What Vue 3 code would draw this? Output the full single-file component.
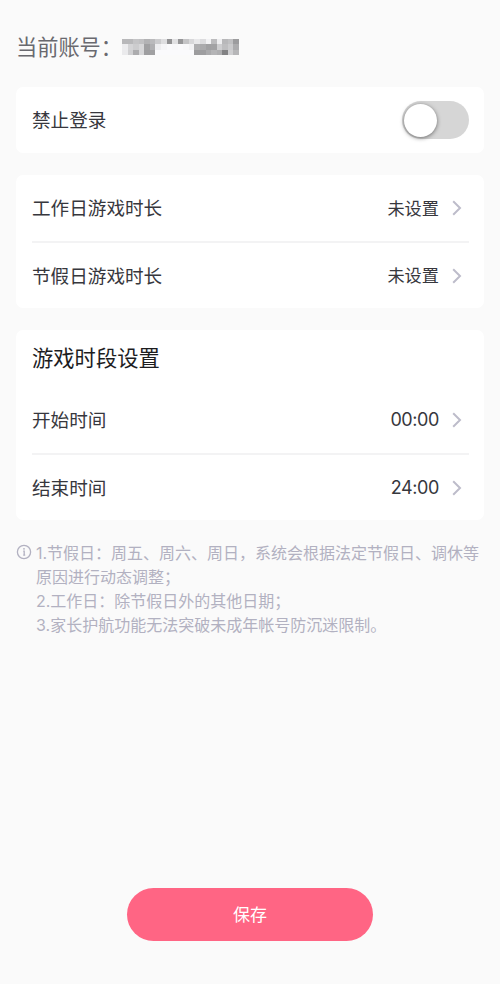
<script setup>
import { ref } from 'vue'

const blocked = ref(false)

const durations = [
  { label: '工作日游戏时长', value: '未设置' },
  { label: '节假日游戏时长', value: '未设置' },
]
const periods = [
  { label: '开始时间', value: '00:00' },
  { label: '结束时间', value: '24:00' },
]

// Grey levels of the mosaic that hides the account number, row by row
const mosaic = [
  [184, 184, 196, 192, 178, 186, 204, 222, 146, 224, 150, 196, 216, 232, 220, 242, 188, 238, 184, 192, 156],
  [236, 212, 204, 214, 160, 176, 238, 246, 250, 248, 250, 248, 242, 174, 170, 160, 162, 206, 190, 202, 172],
  [234, 208, 172, 214, 158, 160, 250, 250, 250, 250, 250, 250, 250, 156, 158, 170, 180, 174, 130, 206, 182],
]
const cells = mosaic.flat()
</script>

<template>
  <main class="page">
    <header class="account">
      <span>当前账号：</span>
      <div class="mosaic">
        <i v-for="(g, i) in cells" :key="i" :style="{ background: `rgb(${g}, ${g}, ${g + 2})` }"></i>
      </div>
    </header>

    <section class="card">
      <div class="row">
        <span class="label">禁止登录</span>
        <button class="toggle" :class="{ on: blocked }" @click="blocked = !blocked"><span class="knob"></span></button>
      </div>
    </section>

    <section class="card">
      <div v-for="item in durations" :key="item.label" class="row">
        <span class="label">{{ item.label }}</span>
        <span class="value">{{ item.value }}</span>
        <svg class="chevron" viewBox="0 0 10 16"><path d="M1.2 1.3 8 8l-6.8 6.7" /></svg>
      </div>
    </section>

    <section class="card">
      <h2>游戏时段设置</h2>
      <div v-for="item in periods" :key="item.label" class="row">
        <span class="label">{{ item.label }}</span>
        <span class="value time">{{ item.value }}</span>
        <svg class="chevron" viewBox="0 0 10 16"><path d="M1.2 1.3 8 8l-6.8 6.7" /></svg>
      </div>
    </section>

    <section class="notes">
      <svg class="info" viewBox="0 0 16 16">
        <circle cx="8" cy="8" r="6.6" />
        <path d="M7.2 7.2h1v4.3M7.2 11.2h2" />
        <circle class="dot" cx="8" cy="4.8" r=".9" />
      </svg>
      <div>
        <p>1.节假日：周五、周六、周日，系统会根据法定节假日、调休等原因进行动态调整；</p>
        <p>2.工作日：除节假日外的其他日期；</p>
        <p>3.家长护航功能无法突破未成年帐号防沉迷限制。</p>
      </div>
    </section>

    <button class="save">保存</button>
  </main>
</template>

<style>
body {
  background: #fafafa;
}
</style>

<style scoped>
.page {
  box-sizing: border-box;
  display: flex;
  flex-direction: column;
  height: 984px;
  padding: 32px 16px 43px;
  background: #fafafa;
  color: #37373d;
  font-family: Inter, "Noto Sans CJK SC", sans-serif;
}
.account {
  display: flex;
  align-items: center;
  height: 30px;
  margin-bottom: 25px;
  color: #69696f;
  font-size: 21.2px;
  line-height: 30px;
}
.account span {
  width: 106px;
  white-space: nowrap;
}
.mosaic {
  display: grid;
  grid-template-columns: repeat(21, 1fr);
  grid-template-rows: repeat(3, 1fr);
  width: 117px;
  height: 17px;
  filter: blur(0.4px);
}
.card {
  flex: none;
  margin-bottom: 22px;
  padding: 0 15px 0 16px;
  border-radius: 7px;
  background: #fff;
}
.row {
  box-sizing: border-box;
  display: flex;
  align-items: center;
  height: 66px;
}
.row + .row {
  height: 67px;
  border-top: 2px solid #f3f3f4;
}
.label {
  flex: 1;
  padding-bottom: 3px;
  font-size: 18.6px;
}
.value {
  padding-bottom: 2px;
  font-size: 17.2px;
}
.time {
  padding-bottom: 1px;
  font-size: 18px;
  letter-spacing: -0.4px;
}
.chevron {
  width: 10px;
  height: 16px;
  margin: 0 7px 0 13px;
  fill: none;
  stroke: #bdbcca;
  stroke-width: 2;
}
.toggle {
  display: flex;
  align-items: center;
  width: 67px;
  height: 38px;
  padding: 0 2px;
  border: 0;
  border-radius: 19px;
  background: #d6d6d6;
}
.toggle.on {
  justify-content: flex-end;
  background: #ff6584;
}
.knob {
  width: 33px;
  height: 33px;
  border-radius: 50%;
  background: #fff;
  box-shadow: 0 1px 4px rgba(0, 0, 0, 0.5);
}
h2 {
  margin: 0;
  height: 57px;
  color: #1d1d1f;
  font-size: 21.3px;
  font-weight: 400;
  line-height: 56px;
}
.value:not(.time) {
  margin-right: 0;
}
.notes {
  display: flex;
  gap: 4px;
  margin-top: -1px;
  color: #b2b1c1;
  font-size: 16px;
  line-height: 24px;
}
.notes p {
  margin: 0;
}
.info {
  flex: none;
  width: 16px;
  height: 16px;
  margin-top: 3px;
  fill: none;
  stroke: #b2b1c1;
  stroke-width: 1.3;
}
.info .dot {
  fill: #b2b1c1;
  stroke: none;
}
.save {
  width: 246px;
  height: 53px;
  margin: auto auto 0;
  padding: 0 0 2px;
  border: 0;
  border-radius: 27px;
  background: #ff6584;
  color: #fff;
  font: 17px Inter, "Noto Sans CJK SC", sans-serif;
}
</style>
